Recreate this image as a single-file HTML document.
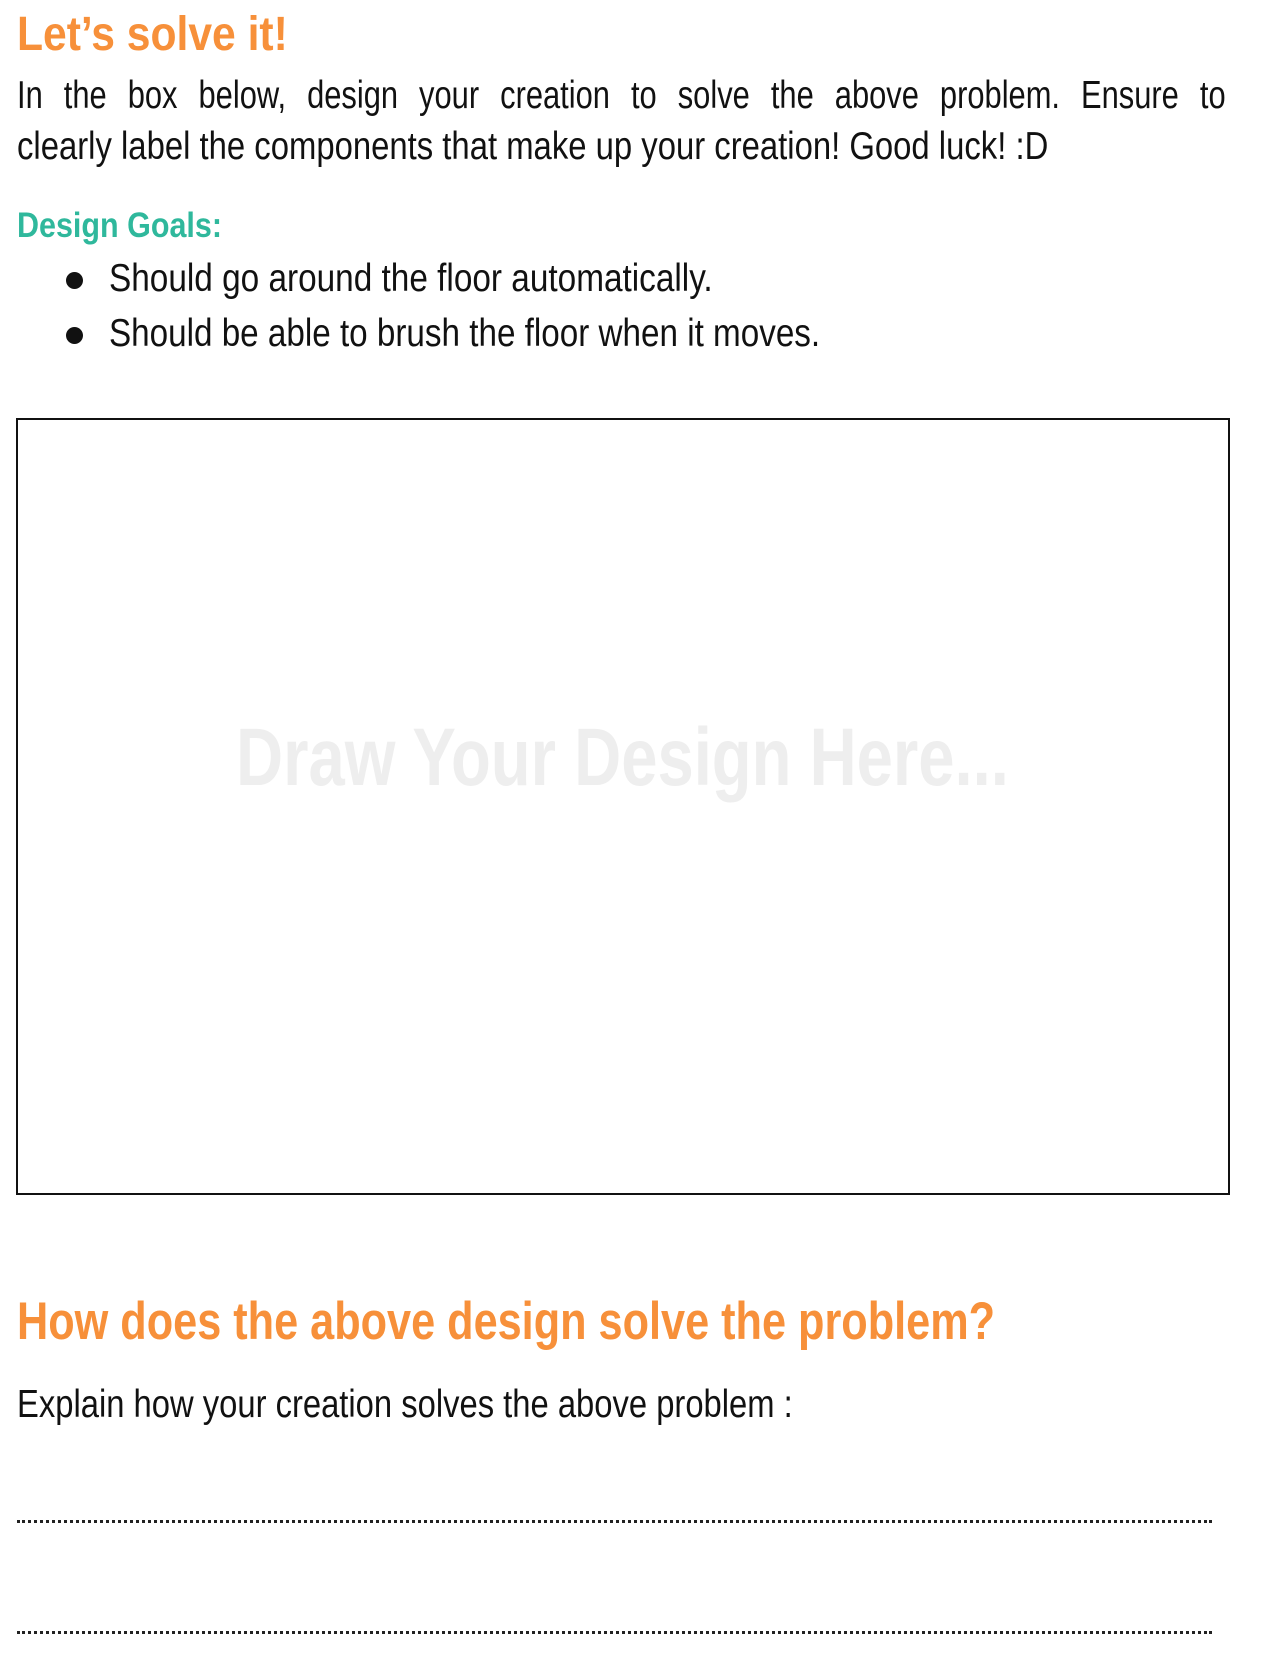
<!DOCTYPE html>
<html><head><meta charset="utf-8"><style>
body{margin:0;width:1270px;height:1680px;background:#fff;position:relative;overflow:hidden;font-family:"Liberation Sans",sans-serif;color:#111}
.a{position:absolute;white-space:nowrap;transform-origin:0 0;line-height:1}
.o{color:#f7903a;font-weight:bold}
.t{color:#2fb89c;font-weight:bold}
.dot{position:absolute;left:17px;width:1195px;height:0;border-top:3px dotted #222}
</style></head><body>
<div class="a o" style="left:17px;top:11px;font-size:48px;transform:scaleX(0.888)">Let’s solve it!</div>
<div class="a" style="left:17px;top:76px;font-size:39px;width:1527px;text-align:justify;text-align-last:justify;transform:scaleX(0.7915)">In the box below, design your creation to solve the above problem. Ensure to</div>
<div class="a" style="left:17px;top:127px;font-size:39px;transform:scaleX(0.842)">clearly label the components that make up your creation! Good luck! :D</div>
<div class="a t" style="left:17px;top:208px;font-size:35px;transform:scaleX(0.871)">Design Goals:</div>
<div style="position:absolute;left:66px;top:272px;width:17px;height:17px;border-radius:50%;background:#111"></div>
<div style="position:absolute;left:66px;top:327px;width:17px;height:17px;border-radius:50%;background:#111"></div>
<div class="a" style="left:109px;top:259px;font-size:39px;transform:scaleX(0.855)">Should go around the floor automatically.</div>
<div class="a" style="left:109px;top:314px;font-size:39px;transform:scaleX(0.852)">Should be able to brush the floor when it moves.</div>
<div style="position:absolute;left:16px;top:418px;width:1210px;height:773px;border:2px solid #111"></div>
<div class="a" style="left:236px;top:717px;font-size:82px;font-weight:bold;color:#eeeeee;transform:scaleX(0.795)">Draw Your Design Here...</div>
<div class="a o" style="left:17px;top:1295px;font-size:53px;transform:scaleX(0.816)">How does the above design solve the problem?</div>
<div class="a" style="left:17px;top:1385px;font-size:39px;transform:scaleX(0.84)">Explain how your creation solves the above problem :</div>
<div class="dot" style="top:1520px"></div>
<div class="dot" style="top:1631px"></div>
</body></html>
